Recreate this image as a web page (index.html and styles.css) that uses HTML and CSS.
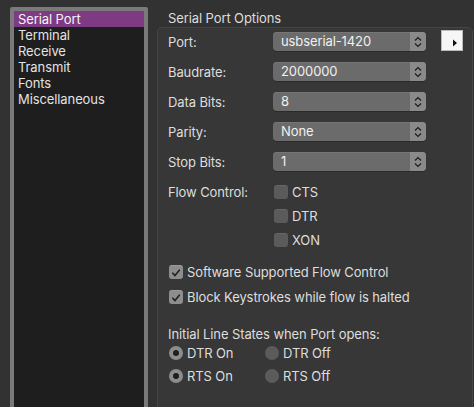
FILE: index.html
```html
<!DOCTYPE html>
<html>
<head>
<meta charset="utf-8">
<link rel="stylesheet" href="styles.css">
</head>
<body>
<div class="window">
  <div class="sidebar">
    <div class="item selected">Serial Port</div>
    <div class="item">Terminal</div>
    <div class="item">Receive</div>
    <div class="item">Transmit</div>
    <div class="item">Fonts</div>
    <div class="item">Miscellaneous</div>
  </div>
  <div class="main">
    <div class="title">Serial Port Options</div>
    <div class="group">
      <div class="row">
        <div class="label">Port:</div>
        <div class="popup"><span class="ptext">usbserial-1420</span><span class="stepper"><svg width="8" height="12" viewBox="0 0 8 12"><path d="M1 4.5 L4 1.5 L7 4.5 M1 7.5 L4 10.5 L7 7.5" fill="none" stroke="#1c1c1c" stroke-width="1.2"/></svg></span></div>
        <div class="morebtn"><svg width="6" height="8" viewBox="0 0 6 8"><path d="M1 0.5 L5 4 L1 7.5 Z" fill="#111"/></svg></div>
      </div>
      <div class="row">
        <div class="label">Baudrate:</div>
        <div class="popup"><span class="ptext">2000000</span><span class="stepper"><svg width="8" height="12" viewBox="0 0 8 12"><path d="M1 4.5 L4 1.5 L7 4.5 M1 7.5 L4 10.5 L7 7.5" fill="none" stroke="#1c1c1c" stroke-width="1.2"/></svg></span></div>
      </div>
      <div class="row">
        <div class="label">Data Bits:</div>
        <div class="popup"><span class="ptext">8</span><span class="stepper"><svg width="8" height="12" viewBox="0 0 8 12"><path d="M1 4.5 L4 1.5 L7 4.5 M1 7.5 L4 10.5 L7 7.5" fill="none" stroke="#1c1c1c" stroke-width="1.2"/></svg></span></div>
      </div>
      <div class="row">
        <div class="label">Parity:</div>
        <div class="popup"><span class="ptext">None</span><span class="stepper"><svg width="8" height="12" viewBox="0 0 8 12"><path d="M1 4.5 L4 1.5 L7 4.5 M1 7.5 L4 10.5 L7 7.5" fill="none" stroke="#1c1c1c" stroke-width="1.2"/></svg></span></div>
      </div>
      <div class="row">
        <div class="label">Stop Bits:</div>
        <div class="popup"><span class="ptext">1</span><span class="stepper"><svg width="8" height="12" viewBox="0 0 8 12"><path d="M1 4.5 L4 1.5 L7 4.5 M1 7.5 L4 10.5 L7 7.5" fill="none" stroke="#1c1c1c" stroke-width="1.2"/></svg></span></div>
      </div>
      <div class="flow">
        <div class="label flowlabel">Flow Control:</div>
        <div class="checks">
          <div class="check"><span class="box"></span>CTS</div>
          <div class="check"><span class="box"></span>DTR</div>
          <div class="check"><span class="box"></span>XON</div>
        </div>
      </div>
      <div class="check soft"><span class="box on"><svg width="10" height="10" viewBox="0 0 10 10"><path d="M1.8 5.2 L4 7.6 L8.3 2.2" fill="none" stroke="#222" stroke-width="1.6" stroke-linecap="round" stroke-linejoin="round"/></svg></span>Software Supported Flow Control</div>
      <div class="check block"><span class="box on"><svg width="10" height="10" viewBox="0 0 10 10"><path d="M1.8 5.2 L4 7.6 L8.3 2.2" fill="none" stroke="#222" stroke-width="1.6" stroke-linecap="round" stroke-linejoin="round"/></svg></span>Block Keystrokes while flow is halted</div>
      <div class="initial">Initial Line States when Port opens:</div>
      <div class="radios">
        <div class="radio"><span class="dot on"></span>DTR On</div>
        <div class="radio"><span class="dot"></span>DTR Off</div>
        <div class="radio"><span class="dot on"></span>RTS On</div>
        <div class="radio"><span class="dot"></span>RTS Off</div>
      </div>
    </div>
  </div>
</div>
</body>
</html>
```

FILE: styles.css
```css
html, body {
  margin: 0;
  padding: 0;
  background: #323232;
  height: 407px;
  overflow: hidden;
}
body {
  font-family: Inter, "Liberation Sans", sans-serif;
  font-size: 13px;
  letter-spacing: -0.1px;
  color: #dedede;
}
.window {
  display: flex;
  align-items: flex-start;
  height: 407px;
  overflow: hidden;
}
.sidebar {
  margin: 7px 0 0 10px;
  width: 130px;
  height: 400px;
  border: 4px solid #7a7a7a;
  border-radius: 2px;
  background: #1e1e1e;
}
.item {
  height: 16px;
  line-height: 16px;
  padding-left: 4px;
  color: #e2e2e2;
}
.item.selected {
  background: #7e3a82;
  color: #f4f4f4;
}
.main {
  margin-left: 9px;
  width: 316px;
}
.title {
  padding: 10px 0 0 11px;
  height: 27px;
  line-height: 16px;
  box-sizing: border-box;
}
.group {
  border: 1px solid #444;
  border-radius: 5px;
  background: #373737;
  height: 400px;
  box-sizing: border-box;
  padding: 4px 0 0 10px;
}
.row {
  display: flex;
  align-items: center;
  height: 19px;
  margin-bottom: 11px;
}
.label {
  width: 105px;
  flex: none;
}
.popup {
  width: 153px;
  height: 19px;
  box-sizing: border-box;
  display: flex;
  background: #6b6b6b;
  border-radius: 4px;
  box-shadow: inset 0 1px 0 #767676, 0 1px 0 #2a2a2a;
  overflow: hidden;
}
.ptext {
  flex: 1;
  padding-left: 8px;
  line-height: 19px;
  color: #f0f0f0;
}
.stepper {
  width: 16px;
  background: #8a8a8a;
  display: flex;
  align-items: center;
  justify-content: center;
}
.morebtn {
  margin-left: 15px;
  width: 22px;
  height: 21px;
  margin-top: -2px;
  background: #f6f6f6;
  border: 1px solid #bbb;
  box-sizing: border-box;
  display: flex;
  align-items: center;
  justify-content: flex-end;
  padding-right: 4px;
  padding-top: 4px;
}
.flow {
  display: flex;
  margin-top: 14px;
}
.flowlabel {
  line-height: 14px;
}
.checks {
  display: flex;
  flex-direction: column;
  gap: 10px;
  margin-left: 1px;
}
.check {
  display: flex;
  align-items: center;
  height: 14px;
  line-height: 14px;
}
.box {
  width: 14px;
  height: 14px;
  box-sizing: border-box;
  border-radius: 3px;
  background: #5b5b5b;
  border-top: 1px solid #666;
  margin-right: 4px;
  display: flex;
  align-items: center;
  justify-content: center;
  flex: none;
}
.box.on {
  background: #8d8d8d;
  border-top: 1px solid #9a9a9a;
}
.soft {
  margin-top: 18px;
  margin-left: 1px;
}
.block {
  margin-top: 11px;
  margin-left: 1px;
}
.initial {
  margin-top: 22px;
  line-height: 16px;
}
.radios {
  display: grid;
  grid-template-columns: 96px auto;
  row-gap: 9px;
  margin-top: 4px;
  margin-left: 1px;
}
.radio {
  display: flex;
  align-items: center;
  height: 14px;
  line-height: 14px;
}
.dot {
  width: 14px;
  height: 14px;
  border-radius: 50%;
  background: #5b5b5b;
  margin-right: 4px;
  box-sizing: border-box;
  display: flex;
  align-items: center;
  justify-content: center;
  flex: none;
}
.dot.on {
  background: #8d8d8d;
}
.dot.on::after {
  content: "";
  width: 6px;
  height: 6px;
  border-radius: 50%;
  background: #1e1e1e;
}
```
